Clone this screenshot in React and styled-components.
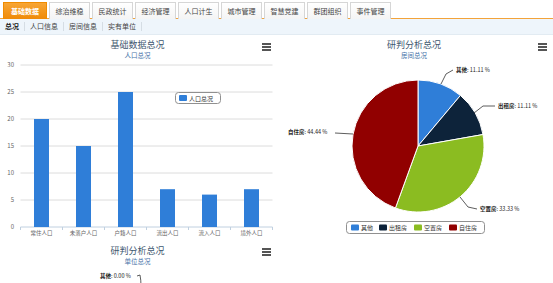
import React from 'react';
import styled, { createGlobalStyle } from 'styled-components';

const Global = createGlobalStyle`
  html, body { margin: 0; padding: 0; background: #fff; }
  body { font-family: "Noto Sans CJK SC", "Noto Sans", sans-serif; }
`;

const Page = styled.div`
  width: 553px;
  height: 283px;
  overflow: hidden;
  background: #fff;
`;

const TabBar = styled.div`
  display: flex;
  gap: 2px;
  height: 19px;
  padding: 2px 0 0 3px;
  box-sizing: border-box;
  border-bottom: 1px solid #f3a33a;
`;

const Tab = styled.div`
  display: flex;
  align-items: center;
  justify-content: center;
  width: ${p => (p.$active ? 44 : 41)}px;
  height: 17px;
  box-sizing: border-box;
  border: 1px solid ${p => (p.$active ? '#f08c00' : '#d6d6d6')};
  border-bottom: none;
  background: ${p => (p.$active ? 'linear-gradient(#f7a534, #ef8a07)' : 'linear-gradient(#ffffff, #f4f4f4)')};
  color: ${p => (p.$active ? '#fff' : '#444')};
  font-size: 7px;
  font-weight: ${p => (p.$active ? 700 : 400)};
`;

const SubNav = styled.div`
  display: flex;
  align-items: center;
  height: 15px;
  padding-left: 5px;
  background: #eef5fb;
  border-bottom: 1px solid #e2ebf2;
`;

const SubItem = styled.span`
  font-size: 7px;
  color: ${p => (p.$active ? '#222' : '#444')};
  font-weight: ${p => (p.$active ? 700 : 400)};
  padding: 0 5px 0 ${p => (p.$first ? 0 : 5)}px;
  border-right: 1px solid #d5dde4;
  line-height: 9px;
`;

const ChartGrid = styled.div`
  display: grid;
  grid-template-columns: 275px 278px;
`;

const Column = styled.div`
  display: flex;
  flex-direction: column;
`;

const ChartPanel = styled.div`
  position: relative;
  height: ${p => p.$h}px;
`;

const ChartHeader = styled.div`
  display: flex;
  flex-direction: column;
  align-items: center;
  padding-top: ${p => p.$top || 4}px;
`;

const Title = styled.div`
  font-size: 9px;
  line-height: 13px;
  color: #3e576f;
`;

const Subtitle = styled.div`
  font-size: 6.5px;
  line-height: 9px;
  color: #4572a7;
`;

const MenuButton = styled.div`
  position: absolute;
  top: ${p => p.$top || 8}px;
  right: ${p => p.$right || 3}px;
  width: 9px;
  display: flex;
  flex-direction: column;
  gap: 1.5px;
  span {
    display: block;
    height: 1.5px;
    background: #555;
  }
`;

const Menu = ({ top, right }) => (
  <MenuButton $top={top} $right={right}>
    <span />
    <span />
    <span />
  </MenuButton>
);

const Plot = styled.svg`
  display: block;
  font-family: "Noto Sans CJK SC", "Noto Sans", sans-serif;
`;

const tabs = ['基础数据', '综治维稳', '民政统计', '经济管理', '人口计生', '城市管理', '智慧党建', '群团组织', '事件管理'];
const subs = ['总况', '人口信息', '房间信息', '实有单位'];

const bars = [
  { name: '常住人口', v: 20 },
  { name: '未落户人口', v: 15 },
  { name: '户籍人口', v: 25 },
  { name: '流出人口', v: 7 },
  { name: '流入人口', v: 6 },
  { name: '境外人口', v: 7 },
];

const BarChart = () => {
  const x0 = 20.5;
  const step = 42;
  const yZero = 167;
  const unit = 27 / 5;
  return (
    <Plot width="275" height="178">
      {[0, 5, 10, 15, 20, 25, 30].map(t => {
        const y = yZero - t * unit;
        return (
          <g key={t}>
            <line x1={x0} x2={x0 + step * 6} y1={y} y2={y} stroke={t === 0 ? '#c0d0e0' : '#dcdcdc'} strokeWidth="1" />
            <text x="14" y={y + 2} fontSize="6" fill="#666" textAnchor="end">{t}</text>
          </g>
        );
      })}
      {bars.map((b, i) => {
        const cx = x0 + step * i + step / 2;
        const h = b.v * unit;
        return (
          <g key={b.name}>
            <rect x={cx - 7.5} y={yZero - h} width="15" height={h} fill="#2f7ed8" />
            <line x1={x0 + step * i} x2={x0 + step * i} y1={yZero} y2={yZero + 3} stroke="#c0d0e0" />
            <text x={cx} y={yZero + 8} fontSize="5.5" fill="#666" textAnchor="middle">{b.name}</text>
          </g>
        );
      })}
      <line x1={x0 + step * 6} x2={x0 + step * 6} y1={yZero} y2={yZero + 3} stroke="#c0d0e0" />
      <rect x="175.5" y="32.5" width="45" height="11" rx="3" fill="#fff" stroke="#909090" />
      <rect x="179" y="35" width="8" height="6" rx="1" fill="#2f7ed8" />
      <text x="189" y="40.5" fontSize="6" fill="#333">人口总况</text>
    </Plot>
  );
};

const slices = [
  { name: '其他', pct: 11.11, color: '#2f7ed8' },
  { name: '出租房', pct: 11.11, color: '#0d233a' },
  { name: '空置房', pct: 33.33, color: '#8bbc21' },
  { name: '自住房', pct: 44.44, color: '#910000' },
];

const PieChart = () => {
  const cx = 143;
  const cy = 86;
  const r = 66;
  const total = slices.reduce((s, d) => s + d.pct, 0);
  let acc = 0;
  const pt = a => [cx + r * Math.sin(a), cy - r * Math.cos(a)];
  const paths = slices.map(s => {
    const a0 = (acc / total) * Math.PI * 2;
    acc += s.pct;
    const a1 = (acc / total) * Math.PI * 2;
    const [x0, y0] = pt(a0);
    const [x1, y1] = pt(a1);
    const large = a1 - a0 > Math.PI ? 1 : 0;
    return { ...s, d: `M${cx},${cy} L${x0},${y0} A${r},${r} 0 ${large} 1 ${x1},${y1} Z` };
  });
  const labels = [
    { name: '其他', val: ': 11.11 %', x: 181, y: 12, line: '166,24 171,14 178,10' },
    { name: '出租房', val: ': 11.11 %', x: 223, y: 48, line: '199,53 208,46 220,46' },
    { name: '自住房', val: ': 44.44 %', x: 13, y: 74, line: '78,74 60,73' },
    { name: '空置房', val: ': 33.33 %', x: 205, y: 151, line: '185,137 193,147 202,149' },
  ];
  const legend = [
    { name: '其他', x: 76 },
    { name: '出租房', x: 104 },
    { name: '空置房', x: 139 },
    { name: '自住房', x: 174 },
  ];
  return (
    <Plot width="278" height="178">
      {paths.map(p => (
        <path key={p.name} d={p.d} fill={p.color} stroke="#fff" strokeWidth="1" />
      ))}
      {labels.map(l => (
        <g key={l.name}>
          <polyline points={l.line} fill="none" stroke="#333" strokeWidth="0.8" />
          <text x={l.x} y={l.y} fontSize="5.5" fill="#222">
            <tspan fontWeight="700">{l.name}</tspan>
            <tspan>{l.val}</tspan>
          </text>
        </g>
      ))}
      <rect x="71.5" y="161.5" width="138" height="12" rx="3" fill="#fff" stroke="#909090" />
      {legend.map((g, i) => (
        <g key={g.name}>
          <rect x={g.x} y="164.5" width="8" height="6" rx="1" fill={slices[i].color} />
          <text x={g.x + 10} y="170" fontSize="6" fill="#333">{g.name}</text>
        </g>
      ))}
    </Plot>
  );
};

const EmptyPie = () => (
  <Plot width="275" height="20">
    <text x="100" y="12" fontSize="5.5" fill="#222">
      <tspan fontWeight="700">其他</tspan>
      <tspan>: 0.00 %</tspan>
    </text>
    <path d="M137,10 L140,9 Q141,14 141,20" fill="none" stroke="#333" strokeWidth="0.8" />
  </Plot>
);

export default function App() {
  return (
    <Page>
      <Global />
      <TabBar>
        {tabs.map((t, i) => (
          <Tab key={t} $active={i === 0}>{t}</Tab>
        ))}
      </TabBar>
      <SubNav>
        {subs.map((s, i) => (
          <SubItem key={s} $active={i === 0} $first={i === 0}>{s}</SubItem>
        ))}
      </SubNav>
      <ChartGrid>
        <Column>
          <ChartPanel $h={202}>
            <ChartHeader $top={3}>
              <Title>基础数据总况</Title>
              <Subtitle>人口总况</Subtitle>
            </ChartHeader>
            <Menu top={8} right={4} />
            <BarChart />
          </ChartPanel>
          <ChartPanel $h={45}>
            <ChartHeader $top={7}>
              <Title>研判分析总况</Title>
              <Subtitle>单位总况</Subtitle>
            </ChartHeader>
            <Menu top={11} right={4} />
            <EmptyPie />
          </ChartPanel>
        </Column>
        <ChartPanel $h={202}>
          <ChartHeader $top={3}>
            <Title>研判分析总况</Title>
            <Subtitle>房间总况</Subtitle>
          </ChartHeader>
          <Menu top={8} right={6} />
          <PieChart />
        </ChartPanel>
      </ChartGrid>
    </Page>
  );
}
